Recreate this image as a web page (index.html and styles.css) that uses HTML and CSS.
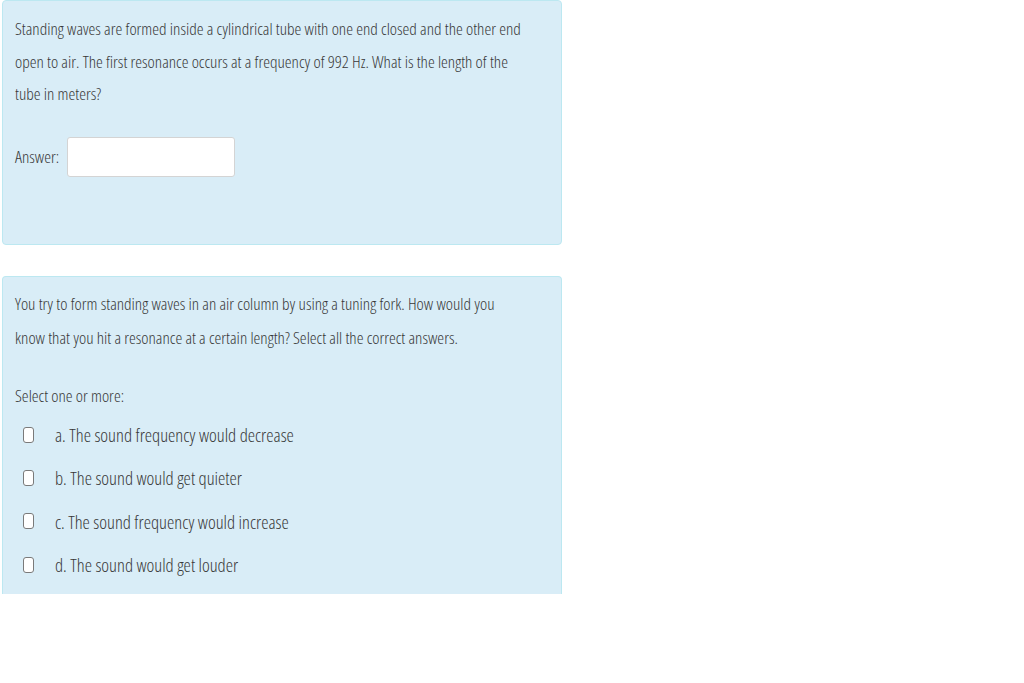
FILE: index.html
```html
<!DOCTYPE html>
<html>
<head>
<meta charset="utf-8">
<link rel="stylesheet" href="styles.css">
</head>
<body>
<div class="page">
  <div class="que que-short">
    <p class="qtext">Standing waves are formed inside a cylindrical tube with one end closed and the other end open to air. The first resonance occurs at a frequency of 992 Hz. What is the length of the tube in meters?</p>
    <div class="ablock">
      <label class="alabel">Answer:</label>
      <input class="answer-input" type="text">
    </div>
  </div>
  <div class="que que-multi">
    <p class="qtext qtext-2">You try to form standing waves in an air column by using a tuning fork. How would you know that you hit a resonance at a certain length? Select all the correct answers.</p>
    <div class="prompt">Select one or more:</div>
    <div class="options">
      <div class="option"><span class="cb"></span><span class="opt-text">a. The sound frequency would decrease</span></div>
      <div class="option"><span class="cb"></span><span class="opt-text">b. The sound would get quieter</span></div>
      <div class="option"><span class="cb"></span><span class="opt-text">c. The sound frequency would increase</span></div>
      <div class="option"><span class="cb"></span><span class="opt-text">d. The sound would get louder</span></div>
    </div>
  </div>
</div>
</body>
</html>
```
FILE: styles.css
```css
html, body {
  margin: 0;
  padding: 0;
  background: #ffffff;
}
body {
  font-family: "Open Sans", "Liberation Sans", sans-serif;
  font-stretch: 75%;
  font-weight: 350;
  color: #383838;
  font-size: 17.2px;
  height: 683px;
  overflow: hidden;
}
.page {
  width: 560px;
  margin-left: 2px;
  display: flex;
  flex-direction: column;
  gap: 31px;
}
.que {
  background: #d9edf7;
  border: 1px solid #bce8f1;
  border-radius: 4px;
  padding: 0 34px 0 12px;
  box-sizing: border-box;
}
.que-short {
  height: 245px;
  padding-top: 12px;
}
.que-multi {
  height: 318px;
  padding-top: 10px;
  border-bottom: none;
  border-radius: 4px 4px 0 0;
}
.qtext {
  margin: 0;
  line-height: 32.5px;
}
.qtext-2 {
  line-height: 34px;
}
.ablock {
  margin-top: 26px;
  display: flex;
  align-items: center;
  gap: 8px;
}
.alabel {
  line-height: 20px;
}
.answer-input {
  width: 168px;
  height: 40px;
  box-sizing: border-box;
  border: 1px solid #d4d4d4;
  border-radius: 3px;
  background: #fff;
  margin: 0;
}
.prompt {
  margin-top: 24px;
  line-height: 34px;
}
.options {
  margin-top: 0;
  display: flex;
  flex-direction: column;
}
.option {
  height: 43.3px;
  display: flex;
  align-items: center;
  font-size: 18.5px;
}
.cb {
  width: 9px;
  height: 14px;
  border: 1px solid #7a7a7a;
  border-radius: 3px;
  background: #fff;
  margin-left: 8px;
  margin-right: 21px;
  flex: none;
}
```
